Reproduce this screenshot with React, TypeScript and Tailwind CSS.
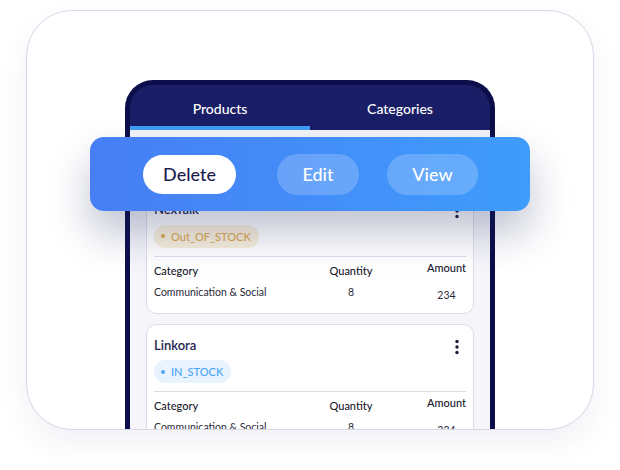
import React from 'react';

const font = { fontFamily: 'Lato, "Open Sans", sans-serif' };

interface ProductCardProps {
  name: string;
  status: 'IN_STOCK' | 'Out_OF_STOCK';
  category: string;
  quantity: number;
  amount: number;
}

const Dots = () => (
  <svg width="6" height="16" viewBox="0 0 6 16" className="mt-[2px]">
    <circle cx="3" cy="2.5" r="1.7" fill="#1b1c3a" />
    <circle cx="3" cy="8" r="1.7" fill="#1b1c3a" />
    <circle cx="3" cy="13.5" r="1.7" fill="#1b1c3a" />
  </svg>
);

const ProductCard: React.FC<ProductCardProps> = ({ name, status, category, quantity, amount }) => {
  const inStock = status === 'IN_STOCK';
  return (
    <div className="bg-white border border-[#dcdce8] rounded-[10px] px-[7px] pt-[11px] pb-[10px]">
      <div className="flex items-center justify-between h-[20px] pr-[6px]">
        <span className="text-[13px] font-semibold text-[#1d1f52]">{name}</span>
        <Dots />
      </div>
      <div
        className={
          'mt-[4px] h-[23px] inline-flex items-center rounded-full pl-[7px] pr-[8px] gap-[6px] ' +
          (inStock ? 'bg-[#e8f3fe] text-[#4aa6f4]' : 'bg-[#f8efdd] text-[#dca84f]')
        }
      >
        <span className={'w-[4px] h-[4px] rounded-full ' + (inStock ? 'bg-[#4aa6f4]' : 'bg-[#dca84f]')} />
        <span className="text-[11px] font-medium leading-none">{status}</span>
      </div>
      <div className="mt-[8px] h-px bg-[#dcdce6]" />
      <div className="flex mt-[6px]">
        <div className="w-[160px] flex flex-col">
          <span className="text-[11px] leading-[16px] font-medium text-[#1a1a2e]">Category</span>
          <span className="mt-[5px] text-[10.5px] leading-[16px] text-[#2a2a3a]">{category}</span>
        </div>
        <div className="w-[74px] flex flex-col items-center">
          <span className="text-[11px] leading-[16px] font-medium text-[#1a1a2e]">Quantity</span>
          <span className="mt-[5px] text-[10.5px] leading-[16px] text-[#2a2a3a]">{quantity}</span>
        </div>
        <div className="ml-auto flex flex-col items-center">
          <span className="-mt-[3px] text-[11px] leading-[16px] font-medium text-[#1a1a2e]">Amount</span>
          <span className="mt-[11px] text-[10.5px] leading-[16px] text-[#2a2a3a]">{amount}</span>
        </div>
      </div>
    </div>
  );
};

export default function App(): JSX.Element {
  return (
    <div className="w-[620px] h-[470px] bg-white pt-[10px] pl-[26px]" style={font}>
      <div className="relative w-[568px] h-[420px] rounded-[46px] border border-[#d8d6e8] bg-white overflow-hidden shadow-[0_14px_30px_rgba(70,70,130,0.07)]">
        <div className="ml-[98px] mt-[69px] w-[370px] h-[400px] border-[5px] border-b-0 border-[#0b0e4b] rounded-t-[28px] bg-[#1a1e66] overflow-hidden">
          <div className="flex h-[41px] pt-[6px] text-white text-[14px] font-medium">
            <div className="w-1/2 flex items-center justify-center">Products</div>
            <div className="w-1/2 flex items-center justify-center">Categories</div>
          </div>
          <div className="flex h-[4px]">
            <div className="w-1/2 bg-[#3d9cf5]" />
          </div>
          <div className="h-full bg-[#f5f5fa] px-[16px] pt-[58px] flex flex-col gap-[10px]">
            <ProductCard name="NexTalk" status="Out_OF_STOCK" category="Communication & Social" quantity={8} amount={234} />
            <ProductCard name="Linkora" status="IN_STOCK" category="Communication & Social" quantity={8} amount={234} />
          </div>
        </div>

        <div className="absolute left-[63px] top-[126px] w-[440px] h-[74px] rounded-[14px] bg-gradient-to-r from-[#477ef5] to-[#3e9cfb] shadow-[0_22px_40px_rgba(30,40,90,0.28)] flex items-center pl-[53px]">
          <button className="w-[93px] h-[39px] rounded-full bg-white text-[#1b1d4f] text-[18px] font-medium">Delete</button>
          <button className="ml-[41px] w-[82px] h-[41px] rounded-full bg-white/20 text-white text-[18px] font-medium">Edit</button>
          <button className="ml-[28px] w-[91px] h-[41px] rounded-full bg-white/20 text-white text-[18px] font-medium">View</button>
        </div>
      </div>
    </div>
  );
}
